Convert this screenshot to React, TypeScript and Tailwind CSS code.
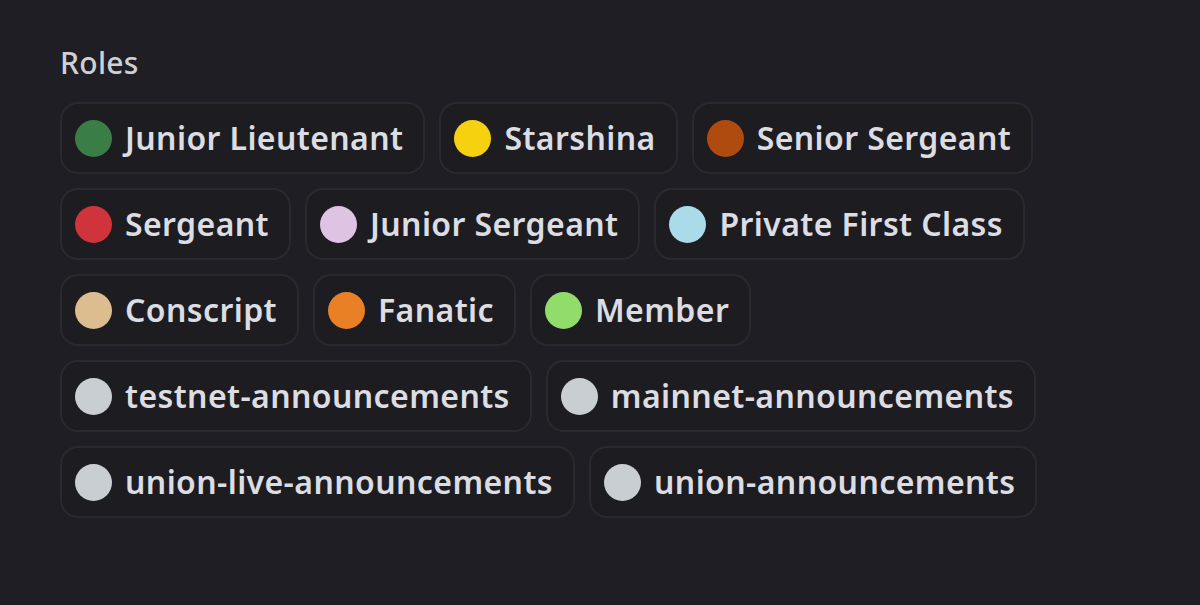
const roles = [
  { name: 'Junior Lieutenant', color: '#3b7d46' },
  { name: 'Starshina', color: '#f5d10f' },
  { name: 'Senior Sergeant', color: '#b04b0f' },
  { name: 'Sergeant', color: '#cf333b' },
  { name: 'Junior Sergeant', color: '#dfc3e2' },
  { name: 'Private First Class', color: '#abdbe8' },
  { name: 'Conscript', color: '#dbbd90' },
  { name: 'Fanatic', color: '#ea8026' },
  { name: 'Member', color: '#92dc6c' },
  { name: 'testnet-announcements', color: '#c9ced2' },
  { name: 'mainnet-announcements', color: '#c9ced2' },
  { name: 'union-live-announcements', color: '#c9ced2' },
  { name: 'union-announcements', color: '#c9ced2' },
];

function RoleChip({ name, color }: { name: string; color: string }) {
  return (
    <div className="flex h-[72px] items-center gap-[13px] rounded-[18px] border-2 border-[#29292f] bg-[#1c1c21] pl-[13px] pr-[20px]">
      <span className="h-[37px] w-[37px] shrink-0 rounded-full" style={{ backgroundColor: color }} />
      <span className="text-[32px] font-semibold leading-none tracking-[0.4px] text-[#dcdde2]">{name}</span>
    </div>
  );
}

export default function App() {
  return (
    <div className="h-[605px] w-[1200px] overflow-hidden bg-[#1f1e24] pl-[60px] pt-[48px] font-['Noto_Sans',sans-serif]">
      <h2 className="text-[30px] font-medium leading-none tracking-[0.3px] text-[#cfd0d4]">Roles</h2>
      <div className="mt-[24px] flex w-[990px] flex-wrap gap-x-[14px] gap-y-[14px]">
        {roles.map((role) => (
          <RoleChip key={role.name} name={role.name} color={role.color} />
        ))}
      </div>
    </div>
  );
}
